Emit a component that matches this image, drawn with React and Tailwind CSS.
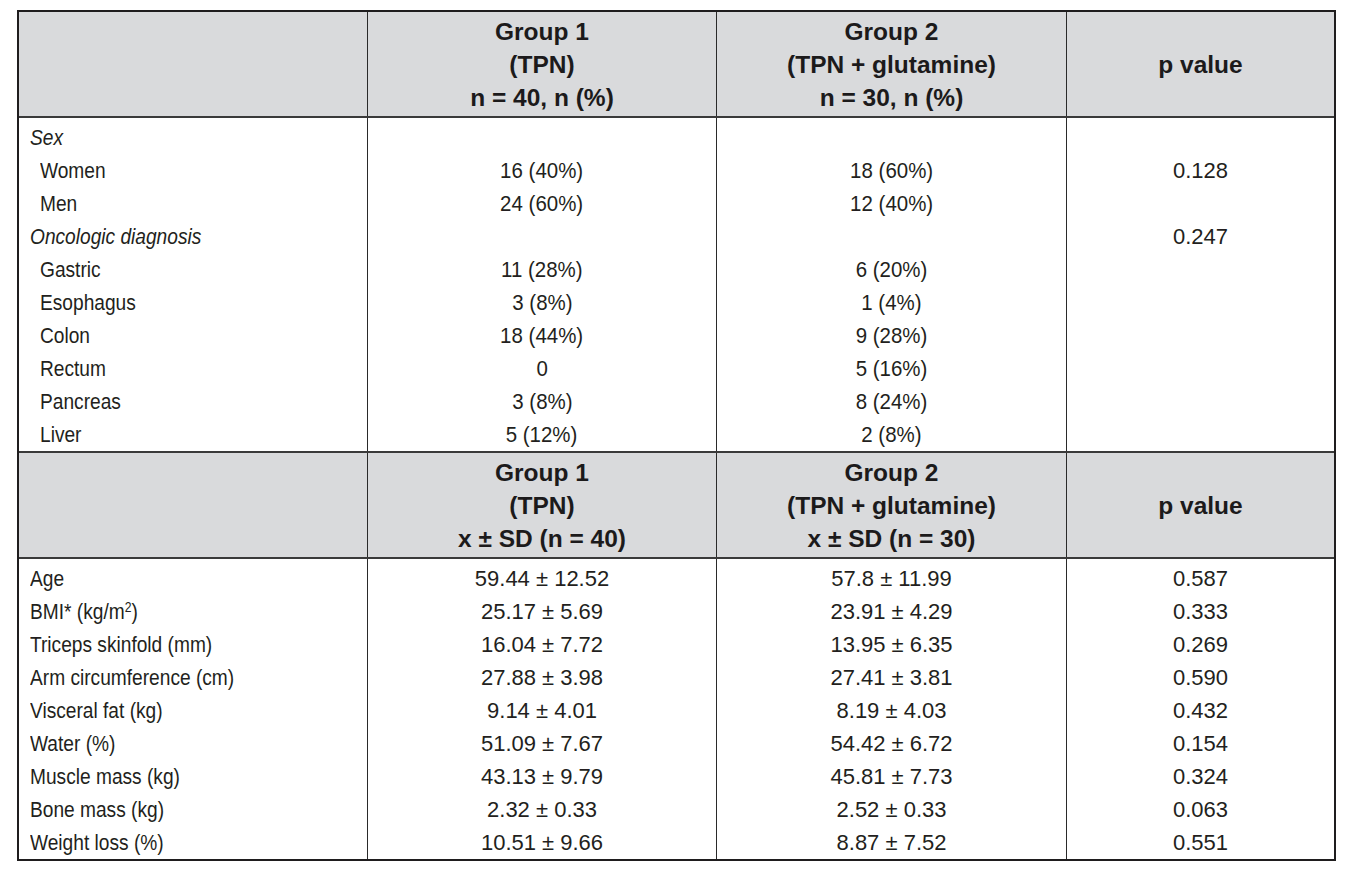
import React from "react";

const body = { fontFamily: '"Liberation Sans", Arial, sans-serif' };
const head = { fontFamily: '"Liberation Sans", Arial, sans-serif' };

const rows1 = [
  { label: "Sex", italic: true, a: "", b: "", p: "" },
  { label: "Women", indent: true, a: "16 (40%)", b: "18 (60%)", p: "0.128" },
  { label: "Men", indent: true, a: "24 (60%)", b: "12 (40%)", p: "" },
  { label: "Oncologic diagnosis", italic: true, a: "", b: "", p: "0.247" },
  { label: "Gastric", indent: true, a: "11 (28%)", b: "6 (20%)", p: "" },
  { label: "Esophagus", indent: true, a: "3 (8%)", b: "1 (4%)", p: "" },
  { label: "Colon", indent: true, a: "18 (44%)", b: "9 (28%)", p: "" },
  { label: "Rectum", indent: true, a: "0", b: "5 (16%)", p: "" },
  { label: "Pancreas", indent: true, a: "3 (8%)", b: "8 (24%)", p: "" },
  { label: "Liver", indent: true, a: "5 (12%)", b: "2 (8%)", p: "" },
];

const rows2 = [
  { label: "Age", a: "59.44 ± 12.52", b: "57.8 ± 11.99", p: "0.587" },
  { label: "BMI", a: "25.17 ± 5.69", b: "23.91 ± 4.29", p: "0.333", bmi: true },
  { label: "Triceps skinfold (mm)", a: "16.04 ± 7.72", b: "13.95 ± 6.35", p: "0.269" },
  { label: "Arm circumference (cm)", a: "27.88 ± 3.98", b: "27.41 ± 3.81", p: "0.590" },
  { label: "Visceral fat (kg)", a: "9.14 ± 4.01", b: "8.19 ± 4.03", p: "0.432" },
  { label: "Water (%)", a: "51.09 ± 7.67", b: "54.42 ± 6.72", p: "0.154" },
  { label: "Muscle mass (kg)", a: "43.13 ± 9.79", b: "45.81 ± 7.73", p: "0.324" },
  { label: "Bone mass (kg)", a: "2.32 ± 0.33", b: "2.52 ± 0.33", p: "0.063" },
  { label: "Weight loss (%)", a: "10.51 ± 9.66", b: "8.87 ± 7.52", p: "0.551" },
];

const grid = "grid grid-cols-[348px_349px_350px_1fr]";

function Header({ n1, n2 }) {
  return (
    <div className={`${grid} h-[104px] bg-[#d9dadc] text-[24.5px] font-bold leading-[33px] text-[#1c1a1b]`} style={head}>
      <div />
      <div className="flex flex-col items-center justify-center border-l-[1.5px] border-[#2a2a2a] text-center">
        <div>Group 1</div>
        <div>(TPN)</div>
        <div>{n1}</div>
      </div>
      <div className="flex flex-col items-center justify-center border-l-[1.5px] border-[#2a2a2a] text-center">
        <div>Group 2</div>
        <div>(TPN + glutamine)</div>
        <div>{n2}</div>
      </div>
      <div className="flex items-center justify-center border-l-[1.5px] border-[#2a2a2a]">p value</div>
    </div>
  );
}

function Body({ rows, pct }) {
  const numCls = pct ? "inline-block scale-x-[0.93]" : "inline-block";
  return (
    <div className={`${grid} text-[22px] leading-[33px] text-[#231f20]`} style={body}>
      <div className="pt-[3px]">
        {rows.map((r, i) => (
          <div
            key={i}
            className={`h-[33px] whitespace-nowrap ${r.indent ? "pl-[21px]" : "pl-[11px]"} ${r.italic ? "italic" : ""}`}
          >
            <span className="inline-block origin-left scale-x-[0.87]">
              {r.bmi ? (
                <>
                  BMI* (kg/m<sup className="text-[14px]">2</sup>)
                </>
              ) : (
                r.label
              )}
            </span>
          </div>
        ))}
      </div>
      <div className="border-l-[1.5px] border-[#2a2a2a] pt-[3px] text-center">
        {rows.map((r, i) => (
          <div key={i} className="h-[33px]">
            <span className={numCls}>{r.a}</span>
          </div>
        ))}
      </div>
      <div className="border-l-[1.5px] border-[#2a2a2a] pt-[3px] text-center">
        {rows.map((r, i) => (
          <div key={i} className="h-[33px]">
            <span className={numCls}>{r.b}</span>
          </div>
        ))}
      </div>
      <div className="border-l-[1.5px] border-[#2a2a2a] pt-[3px] text-center">
        {rows.map((r, i) => (
          <div key={i} className="h-[33px]">{r.p}</div>
        ))}
      </div>
    </div>
  );
}

export default function App() {
  return (
    <div className="min-h-[869px] w-[1355px] bg-white pt-[10px] pl-[17px]">
      <div className="w-[1319px] border-2 border-[#1f1d1e]">
        <Header n1="n = 40, n (%)" n2="n = 30, n (%)" />
        <div className="h-[2px] bg-[#3a3a3a]" />
        <Body rows={rows1} pct />
        <div className="h-[2px] bg-[#3a3a3a]" />
        <Header n1="x ± SD (n = 40)" n2="x ± SD (n = 30)" />
        <div className="h-[2px] bg-[#3a3a3a]" />
        <Body rows={rows2} />
      </div>
    </div>
  );
}
